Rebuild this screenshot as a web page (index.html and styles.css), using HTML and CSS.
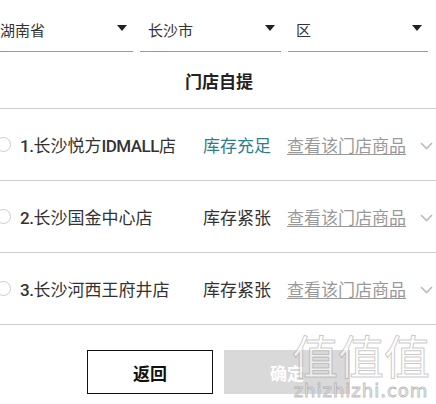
FILE: index.html
```html
<!DOCTYPE html>
<html lang="zh-CN">
<head>
  <meta charset="UTF-8">
  <title>门店自提</title>
  <link rel="stylesheet" href="styles.css">
</head>
<body>
  <div class="panel">
    <div class="region">
      <div class="select"><span>湖南省</span><i class="caret"></i></div>
      <div class="select"><span>长沙市</span><i class="caret"></i></div>
      <div class="select"><span>区</span><i class="caret"></i></div>
    </div>

    <div class="title">门店自提</div>

    <div class="store">
      <span class="radio"></span>
      <span class="name"><b>1.</b>长沙悦方<b>IDMALL</b>店</span>
      <span class="stock ok">库存充足</span>
      <a class="goods" href="#">查看该门店商品</a>
      <svg class="chev" width="13" height="8" viewBox="0 0 13 8"><path d="M1 1l5.5 5.5L12 1" fill="none" stroke="#bbb" stroke-width="1.6"/></svg>
    </div>
    <div class="store">
      <span class="radio"></span>
      <span class="name"><b>2.</b>长沙国金中心店</span>
      <span class="stock">库存紧张</span>
      <a class="goods" href="#">查看该门店商品</a>
      <svg class="chev" width="13" height="8" viewBox="0 0 13 8"><path d="M1 1l5.5 5.5L12 1" fill="none" stroke="#bbb" stroke-width="1.6"/></svg>
    </div>
    <div class="store">
      <span class="radio"></span>
      <span class="name"><b>3.</b>长沙河西王府井店</span>
      <span class="stock">库存紧张</span>
      <a class="goods" href="#">查看该门店商品</a>
      <svg class="chev" width="13" height="8" viewBox="0 0 13 8"><path d="M1 1l5.5 5.5L12 1" fill="none" stroke="#bbb" stroke-width="1.6"/></svg>
    </div>

    <div class="actions">
      <button class="btn back">返回</button>
      <button class="btn ok">确定</button>
    </div>

    <div class="watermark">
      <div class="wm-big">值值值</div>
      <div class="wm-small">zhizhizhi.com</div>
    </div>
  </div>
</body>
</html>
```

FILE: styles.css
```css
body {
  margin: 0;
  font-family: "Noto Sans CJK SC", "Noto Sans", sans-serif;
  color: #333;
  background: #fff;
  overflow: hidden;
}

.panel {
  position: relative;
  width: 446px;
  height: 404px;
  margin-left: -10px;
}

.region {
  display: flex;
  gap: 7px;
  padding-left: 2px;
}

.select {
  width: 141px;
  height: 52px;
  border-bottom: 1px solid #9a9a9a;
  display: flex;
  align-items: center;
  justify-content: space-between;
  padding: 8px 6px 0 8px;
  box-sizing: border-box;
  font-size: 15px;
  color: #333;
}

.select:last-child {
  width: 140px;
}

.caret {
  width: 0;
  height: 0;
  border-left: 5px solid transparent;
  border-right: 5px solid transparent;
  border-top: 6px solid #222;
  margin-bottom: 4px;
}

.title {
  height: 57px;
  border-bottom: 1px solid #ccc;
  display: flex;
  align-items: center;
  justify-content: center;
  font-size: 17px;
  font-weight: bold;
  color: #222;
  padding-left: 12px;
  box-sizing: border-box;
}

.store {
  height: 72px;
  box-sizing: border-box;
  border-bottom: 1px solid #ccc;
  display: flex;
  align-items: center;
  padding-left: 6px;
  font-size: 17px;
  white-space: nowrap;
}

.store:first-of-type {
  height: 73px;
}

.radio {
  width: 13px;
  height: 13px;
  border: 1px solid #ccc;
  border-radius: 50%;
  flex: none;
}

.name {
  flex: none;
  width: 183px;
  margin-left: 9px;
  color: #333;
}

.name b {
  font-family: Roboto, "Noto Sans", sans-serif;
  font-weight: 500;
  letter-spacing: -0.5px;
}

.stock {
  flex: none;
  width: 84px;
  color: #333;
}

.stock.ok {
  color: #2b7e8e;
}

.goods {
  flex: none;
  color: #999;
  text-decoration: underline;
  text-underline-offset: 2px;
}

.chev {
  flex: none;
  margin-left: 14px;
  margin-top: 2px;
}

.actions {
  display: flex;
  gap: 11px;
  padding: 25px 0 0 97px;
}

.btn {
  width: 126px;
  height: 44px;
  font-family: "Noto Sans CJK SC", sans-serif;
  font-size: 17px;
  font-weight: bold;
  cursor: pointer;
}

.btn.back {
  background: #fff;
  border: 1px solid #111;
  color: #111;
}

.btn.ok {
  background: #d9d9d9;
  border: none;
  color: #fff;
}

.watermark {
  position: absolute;
  right: 6px;
  bottom: 2px;
  text-align: center;
  pointer-events: none;
}

.wm-big {
  font-size: 46px;
  line-height: 52px;
  color: rgba(255, 255, 255, 0.6);
  -webkit-text-stroke: 1px rgba(150, 150, 150, 0.5);
}

.wm-small {
  font-family: "DejaVu Sans", sans-serif;
  font-size: 18px;
  line-height: 22px;
  color: rgba(255, 255, 255, 0.8);
  -webkit-text-stroke: 1px rgba(150, 150, 150, 0.6);
  letter-spacing: 1px;
}
```
